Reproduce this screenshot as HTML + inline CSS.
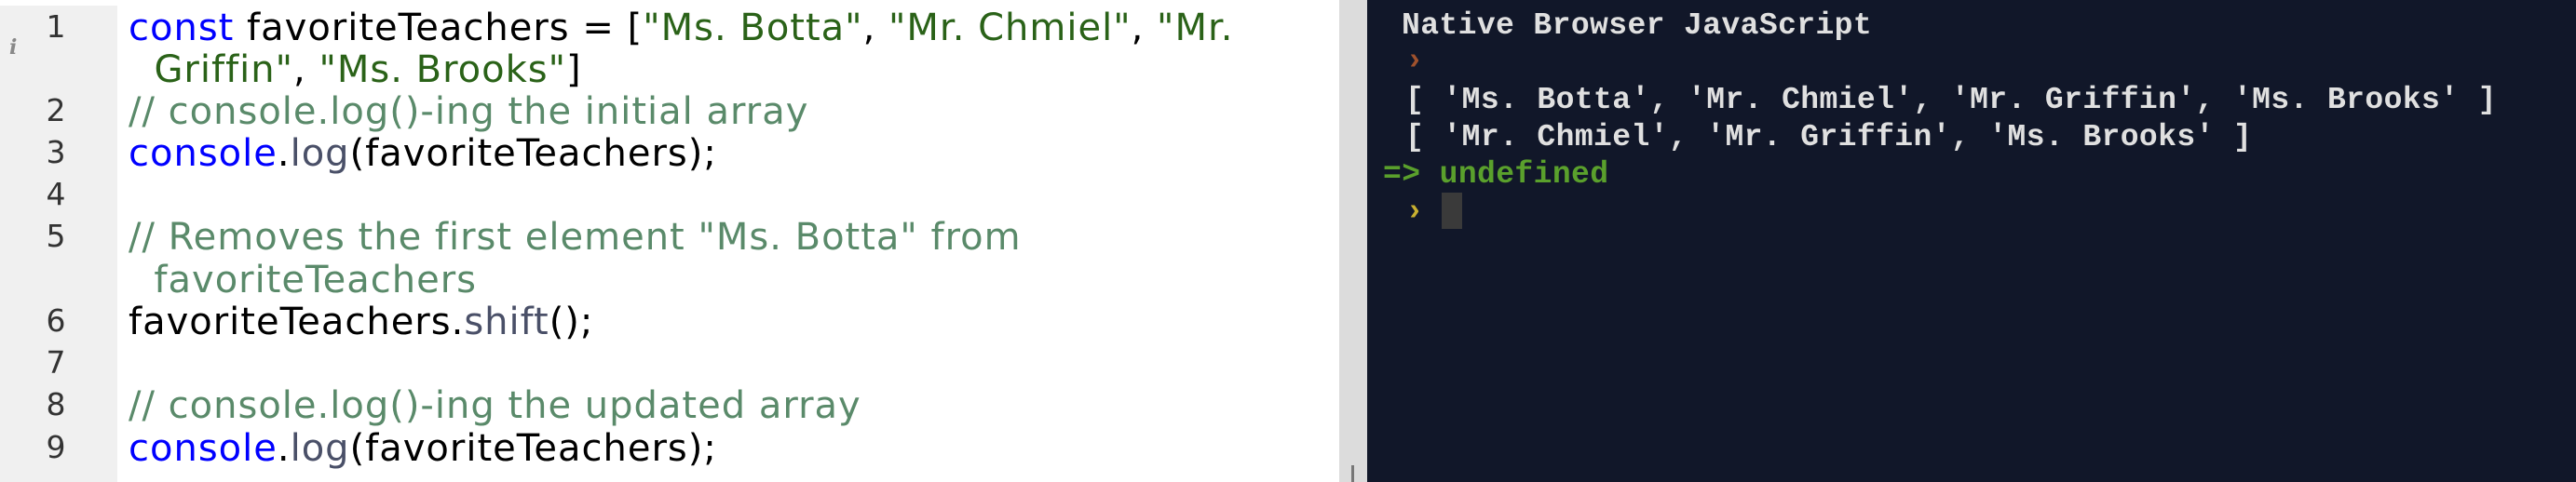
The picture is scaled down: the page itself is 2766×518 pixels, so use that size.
<!DOCTYPE html>
<html><head><style>
body{margin:0;width:2766px;height:518px;overflow:hidden;background:#fff;position:relative}
#gut{position:absolute;left:0;top:6px;width:126px;height:512px;background:#f0f0f0}
.ln{position:absolute;left:40px;width:40px;text-align:center;font:33px "DejaVu Sans",sans-serif;color:#333;line-height:46px}
.cd{position:absolute;left:138px;font:40px "DejaVu Sans",sans-serif;letter-spacing:1px;color:#000;line-height:46px;white-space:pre}
.k{color:#0000ff}.s{color:#2a6218}.c{color:#5a8a6a}.m{color:#4a5068}
#div{position:absolute;left:1438px;top:0;width:30px;height:518px;background:#dcdcdc}
#con{position:absolute;left:1468px;top:0;width:1298px;height:518px;background:#111729}
.t{position:absolute;font:33px "Liberation Mono",monospace;letter-spacing:0.4px;color:#e0e0e0;line-height:40px;white-space:pre;font-weight:bold}
</style></head><body>
<div id="gut"></div>
<div style="position:absolute;left:10px;top:38px;font:bold 22px 'DejaVu Serif',serif;color:#888;font-style:italic">i</div>
<div class="ln" style="top:6px">1</div>
<div class="ln" style="top:96px">2</div>
<div class="ln" style="top:141px">3</div>
<div class="ln" style="top:186px">4</div>
<div class="ln" style="top:231px">5</div>
<div class="ln" style="top:322px">6</div>
<div class="ln" style="top:367px">7</div>
<div class="ln" style="top:412px">8</div>
<div class="ln" style="top:458px">9</div>
<div class="cd" style="top:7px"><span class="k">const</span> favoriteTeachers = [<span class="s">"Ms. Botta"</span>, <span class="s">"Mr. Chmiel"</span>, <span class="s">"Mr.</span></div>
<div class="cd" style="top:52px">  <span class="s">Griffin"</span>, <span class="s">"Ms. Brooks"</span>]</div>
<div class="cd c" style="top:97px">// console.log()-ing the initial array</div>
<div class="cd" style="top:142px"><span class="k">console</span>.<span class="m">log</span>(favoriteTeachers);</div>
<div class="cd c" style="top:232px">// Removes the first element "Ms. Botta" from</div>
<div class="cd c" style="top:278px">  favoriteTeachers</div>
<div class="cd" style="top:323px">favoriteTeachers.<span class="m">shift</span>();</div>
<div class="cd c" style="top:413px">// console.log()-ing the updated array</div>
<div class="cd" style="top:459px"><span class="k">console</span>.<span class="m">log</span>(favoriteTeachers);</div>
<div id="div"></div>
<div style="position:absolute;left:1451px;top:500px;width:3px;height:18px;background:#777"></div>
<div id="con"></div>
<div class="t" style="left:1505px;top:8px">Native Browser JavaScript</div>
<div class="t" style="left:1509px;top:46px;color:#a0522d">›</div>
<div class="t" style="left:1509px;top:88px">[ 'Ms. Botta', 'Mr. Chmiel', 'Mr. Griffin', 'Ms. Brooks' ]</div>
<div class="t" style="left:1509px;top:128px">[ 'Mr. Chmiel', 'Mr. Griffin', 'Ms. Brooks' ]</div>
<div class="t" style="left:1485px;top:168px;color:#5aa02c">=> undefined</div>
<div class="t" style="left:1509px;top:208px;color:#c8b030">›</div>
<div style="position:absolute;left:1548px;top:207px;width:22px;height:39px;background:#3a3a3a"></div>
</body></html>
